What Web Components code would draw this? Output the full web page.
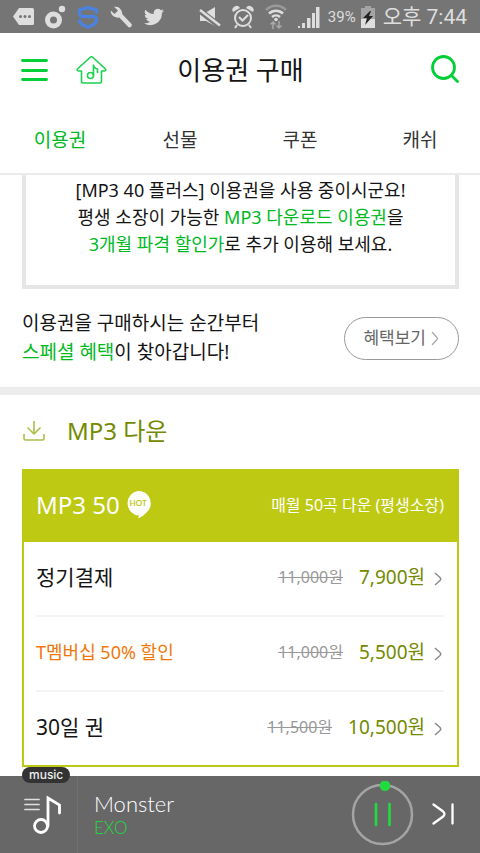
<!DOCTYPE html>
<html lang="ko">
<head>
<meta charset="utf-8">
<meta name="viewport" content="width=device-width, initial-scale=1">
<title>이용권 구매</title>
<style>
html, body { margin: 0; height: 100%; }
body {
  --green: #00b91f; --olive: #748a00; --lime: #bec913; --ink: #141414;
  font-family: "Noto Sans", "Noto Sans CJK KR", sans-serif;
  color: var(--ink); background: #fff;
}
</style>
</head>
<body>
<pass-app></pass-app>
<script>
const define = (name, html, setup) => {
  const template = document.createElement('template');
  template.innerHTML = `<style>
    *, *::before, *::after { box-sizing: border-box; }
    a { color: inherit; text-decoration: none; }
    button { font: inherit; color: inherit; background: none; border: 0; padding: 0; margin: 0; cursor: pointer; }
    svg { display: block; flex: none; }
    h1, h2, h3, p { margin: 0; padding: 0; font-weight: 400; }
  </style>` + html;
  customElements.define(name, class extends HTMLElement {
    constructor() {
      super();
      this.attachShadow({ mode: 'open' }).append(template.content.cloneNode(true));
    }
    connectedCallback() { if (setup) setup(this, this.shadowRoot); }
  });
};

define('status-bar', `<style>
  :host { display: flex; align-items: center; justify-content: space-between; height: 33px; flex: none;
    padding: 0 13px; background: #757575; color: #dedede; font-family: Roboto, "Noto Sans CJK KR", sans-serif; }
  .group { display: flex; align-items: center; gap: 11px; }
  .level { font-size: 15px; line-height: 20px; margin-left: -3px; }
  .battery { margin-left: -6px; }
  time { font-size: 21px; line-height: 32px; margin-left: -3px; white-space: nowrap; }
</style>
<div class="group">
  <svg width="21" height="17" viewBox="0 0 21 17"><path fill="#dedede" d="M6 0h13.500q1.500 0 1.500 1.500v14q0 1.500-1.500 1.500H6L0 8.500z"/><g fill="#757575"><circle cx="7.500" cy="8.500" r="1.500"/><circle cx="12" cy="8.500" r="1.500"/><circle cx="16.500" cy="8.500" r="1.500"/></g></svg>
  <svg width="21" height="24" viewBox="0 0 21 24"><circle cx="8.500" cy="15" r="6" fill="none" stroke="#dedede" stroke-width="5"/><circle cx="17" cy="4" r="3.200" fill="#dedede"/></svg>
  <svg width="22" height="24" viewBox="0 0 22 24"><path d="M19.500 8.500V5L11 2.500 2.500 5v3q0 3.500 4 3.500h9q4 0 4 3 0 3.500-3.500 5.500L11 22l-5-2q-3.500-2-3.500-5.500" fill="none" stroke="#4c82dc" stroke-width="3.400"/></svg>
  <svg width="22" height="22" viewBox="0 0 22 22"><path d="M10 9l9.500 10" stroke="#dedede" stroke-width="4.500" stroke-linecap="round"/><path fill="#dedede" d="M4 .8A7 7 0 0 1 11.800 10 6.800 6.800 0 0 1 .7 4.500L4.500 8 8 4.500z"/></svg>
  <svg width="22" height="20" viewBox="0 0 24 24"><path fill="#dedede" d="M24 4.600a10 10 0 0 1-2.800.8 5 5 0 0 0 2.100-2.700 10 10 0 0 1-3.100 1.200A4.900 4.900 0 0 0 11.800 8.400 14 14 0 0 1 1.700 3.200a4.900 4.900 0 0 0 1.500 6.600 5 5 0 0 1-2.200-.6 4.900 4.900 0 0 0 4 4.900 5 5 0 0 1-2.300.1 4.900 4.900 0 0 0 4.600 3.400A10 10 0 0 1 0 19.500 14 14 0 0 0 21.500 7.100 10 10 0 0 0 24 4.600z"/></svg>
</div>
<div class="group">
  <svg width="22" height="22" viewBox="0 0 22 22"><path fill="#dedede" d="M1 7h5l10-6v19l-9-5H1z"/><path d="M0 4l22 17" stroke="#757575" stroke-width="6"/><path d="M1 4l20 15.500" stroke="#dedede" stroke-width="2.500"/></svg>
  <svg width="22" height="24" viewBox="0 0 22 24"><g fill="none" stroke="#dedede" stroke-width="2"><circle cx="11" cy="13" r="8"/><path d="M7 12l3.500 3.500L16 10M5 20l-2 3M17 20l2 3"/></g><path fill="#dedede" d="M1 7a4 4 0 0 1 7-4zM21 7a4 4 0 0 0-7-4z"/></svg>
  <svg width="22" height="26" viewBox="0 0 22 26"><g fill="none" stroke-width="2.500"><path stroke="#999" d="M1 6a14 14 0 0 1 20 0"/><path stroke="#dedede" d="M4 9.500a10 10 0 0 1 14 0M7 13a6 6 0 0 1 8 0"/></g><circle cx="11" cy="15.500" r="1.800" fill="#dedede"/><path d="M8 25v-7m-2.500 2.500L8 18l2.500 2.500M14 17v7m-2.500-2.500L14 24l2.500-2.500" fill="none" stroke="#aaa" stroke-width="1.500"/></svg>
  <svg width="22" height="22" viewBox="0 0 22 22"><path fill="#dedede" d="M0 22v-2h2v2zM4 22v-5h3v5zM9 22V12h3.500v10zM14 22V7h3v15zM18 22V1h3.500v21z"/></svg>
  <span class="level">39%</span>
  <svg class="battery" width="14" height="22" viewBox="0 0 14 22"><path fill="#a4a4a4" d="M4 0h6v2h4v11H0V2h4z"/><path fill="#dedede" d="M0 13h14v9H0z"/><path fill="#222" d="M9 5l-7 7h4l-2 7 8-9H8l2-5z"/></svg>
  <time datetime="19:44">오후 7:44</time>
</div>`);

define('page-header', `<style>
  :host { display: grid; grid-template-columns: 1fr auto 1fr; align-items: center; height: 74px; flex: none; padding: 0 20px 0 21px; }
  .left { display: flex; gap: 28px; align-items: center; }
  .right { justify-self: end; }
  h1 { font-size: 26px; line-height: 36px; }
</style>
<div class="left">
  <button aria-label="메뉴"><svg width="27" height="24" viewBox="0 0 27 24"><path d="M1.500 2.500h24M1.500 12.500h24M1.500 21.500h24" stroke="#00cf38" stroke-width="2.800" stroke-linecap="round"/></svg></button>
  <button aria-label="홈"><svg width="31" height="30" viewBox="0 0 31 30"><g fill="none" stroke="#19d34f" stroke-width="1.600" stroke-linejoin="round"><path d="M5.500 16H2.500q-2-.5-1-2L14 2.500q1.500-1.500 3 0L29.500 14q1 1.500-1 2h-3v10.500q0 1.500-1.500 1.500H7q-1.500 0-1.500-1.500z"/><circle cx="14.500" cy="20.500" r="3"/><path d="M17.500 20.500V10q0 3 4 4v4"/></g></svg></button>
</div>
<h1><slot></slot></h1>
<div class="right"><button aria-label="검색"><svg width="30" height="30" viewBox="0 0 30 30"><g fill="none" stroke="#00cf38" stroke-width="2.800" stroke-linecap="round"><circle cx="13.500" cy="14.500" r="11"/><path d="M21.500 22.500l6 6"/></g></svg></button></div>`);

define('tab-bar', `<style>
  :host { display: block; flex: none; border-bottom: 2px solid #ebebeb; }
  nav { display: grid; grid-template-columns: repeat(4, 1fr); height: 66px; }
  a { text-align: center; font-size: 19px; line-height: 28px; padding-top: 19px; color: #333; }
  a[aria-current] { color: var(--green); }
</style>
<nav aria-label="구매 메뉴"><a href="#pass" aria-current="page">이용권</a><a href="#gift">선물</a><a href="#coupon">쿠폰</a><a href="#cash">캐쉬</a></nav>`);

define('notice-box', `<style>
  :host { display: block; margin: 0 21px 0 22px; padding: 2px 0 27px; border: 4px solid #e6e6e6; border-top: 0;
    text-align: center; font-size: 18px; line-height: 27px; }
  ::slotted(em) { font-style: normal; color: var(--green); }
</style><slot></slot>`);

define('benefit-row', `<style>
  :host { display: flex; align-items: center; justify-content: space-between; padding: 20px 21px 20px 22px; border-bottom: 8px solid #ededed; }
  p { font-size: 19px; line-height: 29px; }
  ::slotted(em) { font-style: normal; color: var(--green); }
  button { display: flex; align-items: center; gap: 5px; height: 43px; padding: 0 19px 0 18px; border: 1px solid #999; border-radius: 22px; color: #666; font-size: 17px; line-height: 24px; white-space: nowrap; }
</style>
<p><slot></slot></p>
<button>혜택보기<svg width="8" height="15" viewBox="0 0 8 15"><path d="M1 1l5 5.500q1 1 0 2L1 14" fill="none" stroke="#aaa" stroke-width="1.300"/></svg></button>`);

define('section-title', `<style>
  :host { display: flex; align-items: center; gap: 22px; height: 74px; padding: 0 23px 2px; }
  h2 { font-size: 24px; line-height: 34px; color: var(--olive); }
</style>
<svg width="22" height="20" viewBox="0 0 22 20"><g fill="none" stroke="#abc04a" stroke-width="1.600" stroke-linejoin="round"><path d="M11 0v13M4.500 6.500L11 13l6.500-6.500"/><path d="M1 13v4.500q0 1.500 1.500 1.500h17q1.500 0 1.500-1.500V13"/></g></svg>
<h2><slot></slot></h2>`);

define('hot-badge', `<style>
  :host { display: inline-grid; width: 25px; height: 28px; }
  svg, span { grid-area: 1 / 1; }
  span { text-align: center; font: 700 8px/25px Lato, sans-serif; color: var(--lime); }
</style>
<svg width="25" height="28" viewBox="0 0 25 28"><path fill="#fff" d="M12.500 0a12.300 12.300 0 0 1 8 21.500q-4 4.500-8.500 6l1-3a12.300 12.300 0 0 1-.5-24.500z"/></svg><span><slot></slot></span>`);

define('plan-card', `<style>
  :host { display: block; margin: 0 21px 0 22px; border: 2px solid var(--lime); border-top: 0; }
  header { display: flex; align-items: center; justify-content: space-between; height: 73px; padding: 0 13px 2px 12px; background: var(--lime); color: #fff; }
  .name { display: flex; align-items: center; gap: 6px; }
  h3 { font-size: 24px; line-height: 34px; }
  p { font-size: 16px; line-height: 24px; }
  .rows { padding: 0 13px 0 12px; }
</style>
<header><div class="name"><h3><slot name="name"></slot></h3><slot name="badge"></slot></div><p><slot name="summary"></slot></p></header>
<div class="rows"><slot></slot></div>`);

define('price-row', `<style>
  :host { display: block; border-bottom: 2px solid #f4f4f4; }
  :host(:last-of-type) { border-bottom: 0; }
  a { display: flex; align-items: center; height: 73px; padding: 0 2px 4px 0; font-size: 19px; line-height: 28px; }
  .name { flex: 1; font-size: 21px; }
  :host([promo]) .name { color: #f0780a; font-size: 18px; }
  s { color: #999; font-size: 16px; }
  b { font-weight: 400; color: var(--olive); margin: 0 9px 0 16px; }
  svg { margin-top: 5px; }
</style>
<a href="#buy"><span class="name"><slot></slot></span><s></s><b></b><svg width="8" height="14" viewBox="0 0 8 14"><path d="M1 1l5 4.500q1.500 1.500 0 3L1 13" fill="none" stroke="#8c8c8c" stroke-width="1.500"/></svg></a>`,
(el, root) => {
  root.querySelector('s').textContent = el.getAttribute('was');
  root.querySelector('b').textContent = el.getAttribute('now');
});

define('music-player', `<style>
  :host { display: flex; height: 77px; flex: none; position: relative; background: #676767; color: #fff; font-family: Lato, sans-serif; }
  .list { width: 78px; padding-left: 24px; border-right: 1px solid #717171; }
  .badge { position: absolute; left: 22px; top: -9px; height: 16px; padding: 0 7px; border-radius: 8px; background: #333; font: 500 12px/15px Inter, sans-serif; color: #eee; }
  .track { flex: 1; padding: 15px 0 0 16px; }
  .title { font-size: 22px; line-height: 26px; font-weight: 300; }
  .artist { font-size: 17px; line-height: 22px; font-weight: 300; color: #20dc40; }
  .controls { display: flex; align-items: center; gap: 17px; padding: 0 26px 2px 0; }
</style>
<span class="badge">music</span>
<button class="list" aria-label="재생목록"><svg width="38" height="40" viewBox="0 0 38 40"><path d="M1 4.500h14M1 9.500h14M1 14.500h14" stroke="#e0e0e0" stroke-width="1.700" stroke-linecap="round"/><g fill="none" stroke="#fff" stroke-width="2.800" stroke-linecap="round"><circle cx="17" cy="31" r="6.500"/><path d="M24 31V3l11.500 7v8"/></g></svg></button>
<div class="track"><p class="title">Monster</p><p class="artist">EXO</p></div>
<div class="controls">
  <button aria-label="일시정지"><svg width="64" height="66" viewBox="0 0 64 66"><circle cx="31.500" cy="33.500" r="29.500" fill="none" stroke="#a4a4a4" stroke-width="2.500"/><circle cx="34" cy="4.800" r="5.300" fill="#20dc40"/><path d="M25 23v21M38.500 23v21" stroke="#20dc40" stroke-width="2.600" stroke-linecap="round"/></svg></button>
  <button aria-label="다음 곡"><svg width="22" height="22" viewBox="0 0 22 22"><path d="M1.500 1.500l9 6.500q4 3 0 6l-9 6.500M20.500 1.500v19" fill="none" stroke="#fff" stroke-width="2.300" stroke-linecap="round"/></svg></button>
</div>`);

define('pass-app', `<style>
  :host { display: flex; flex-direction: column; height: 100vh; }
  main { flex: 1; min-height: 0; overflow: hidden; }
</style>
<status-bar></status-bar>
<page-header>이용권 구매</page-header>
<tab-bar></tab-bar>
<main>
  <notice-box>[MP3 40 플러스] 이용권을 사용 중이시군요!<br>평생 소장이 가능한 <em>MP3 다운로드 이용권</em>을<br><em>3개월 파격 할인가</em>로 추가 이용해 보세요.</notice-box>
  <benefit-row>이용권을 구매하시는 순간부터<br><em>스페셜 혜택</em>이 찾아갑니다!</benefit-row>
  <section-title>MP3 다운</section-title>
  <plan-card>
    <span slot="name">MP3 50</span><hot-badge slot="badge">HOT</hot-badge><span slot="summary">매월 50곡 다운 (평생소장)</span>
    <price-row was="11,000원" now="7,900원">정기결제</price-row>
    <price-row promo was="11,000원" now="5,500원">T멤버십 50% 할인</price-row>
    <price-row was="11,500원" now="10,500원">30일 권</price-row>
  </plan-card>
</main>
<music-player></music-player>`);
</script>
</body>
</html>
